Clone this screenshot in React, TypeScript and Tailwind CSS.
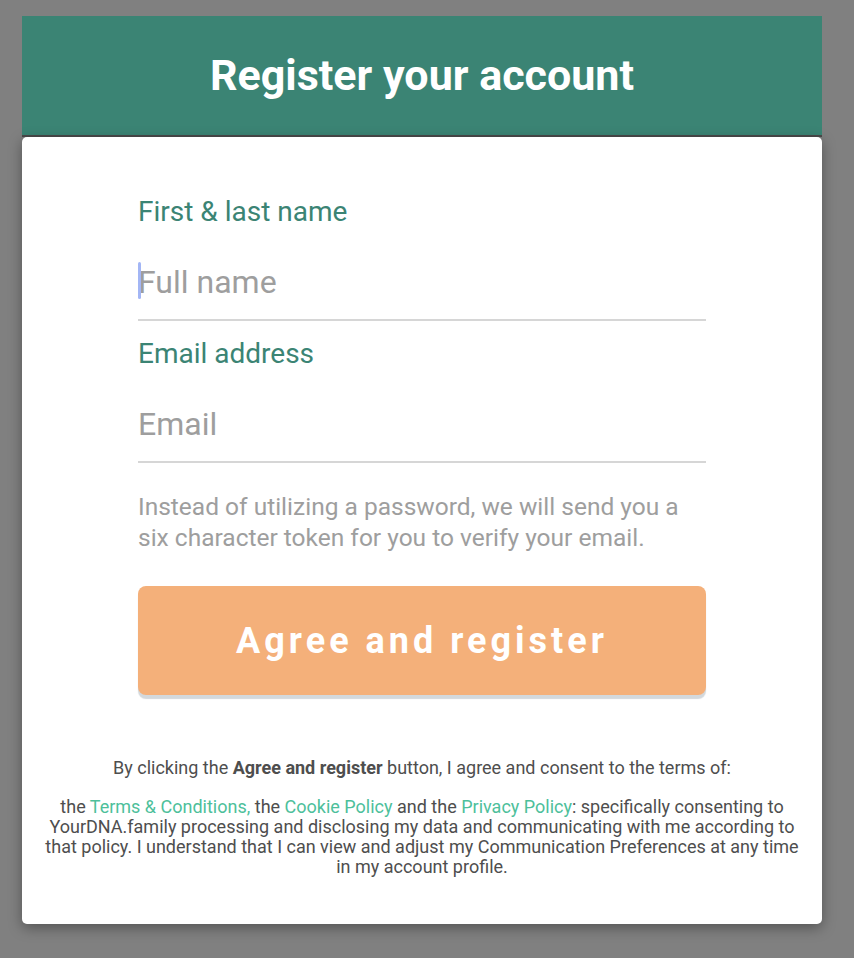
import React from "react";

const Field = ({
  label,
  placeholder,
  type,
  caret,
}: {
  label: string;
  placeholder: string;
  type: string;
  caret?: boolean;
}) => (
  <div>
    <label className="block text-[28px] leading-[36px] text-[#3b8474]">{label}</label>
    <div className="relative">
      <input
        type={type}
        placeholder={placeholder}
        className="block w-full h-[91px] pt-[14px] border-b-2 border-[#d6d6d6] bg-transparent outline-none text-[32px] text-[#333] placeholder:text-[#9e9e9e]"
      />
      {caret && (
        <span className="absolute left-0 top-[32px] w-[3px] h-[37px] rounded-sm bg-[#a3b6f5]" />
      )}
    </div>
  </div>
);

export default function App() {
  return (
    <div className="min-h-screen bg-[#808080] pt-[16px] pb-[34px] font-['Roboto',sans-serif]">
      <div className="ml-[22px] w-[800px]">
        <div className="h-[121px] bg-[#3b8474] border-b-2 border-[#4a4a4a] flex items-center justify-center">
          <h1 className="text-[43px] font-bold text-white leading-none">Register your account</h1>
        </div>
        <div className="bg-white rounded-[5px] shadow-[0_4px_14px_rgba(0,0,0,0.35)] pt-[57px] pb-[47px]">
          <div className="w-[568px] mx-auto">
            <Field label="First & last name" placeholder="Full name" type="text" caret />
            <div className="mt-[15px]">
              <Field label="Email address" placeholder="Email" type="email" />
            </div>
            <p className="mt-[28px] text-[24.5px] leading-[31px] text-[#9e9e9e]">
              Instead of utilizing a password, we will send you a six character token for you to
              verify your email.
            </p>
            <button className="mt-[33px] w-full h-[109px] rounded-[8px] bg-[#f4b07a] text-white text-[36px] font-bold tracking-[4px] shadow-[0_4px_1px_#d3d8dc]">
              Agree and register
            </button>
          </div>
          <div className="mt-[63px] px-[20px] text-center text-[18px] leading-[20px] text-[#4e4e4e]">
            <p>
              By clicking the <b>Agree and register</b> button, I agree and consent to the terms of:
            </p>
            <p className="mt-[19px]">
              the <a className="text-[#4dbf9b]">Terms &amp; Conditions,</a> the{" "}
              <a className="text-[#4dbf9b]">Cookie Policy</a> and the{" "}
              <a className="text-[#4dbf9b]">Privacy Policy</a>: specifically consenting to
              YourDNA.family processing and disclosing my data and communicating with me according
              to that policy. I understand that I can view and adjust my Communication Preferences
              at any time in my account profile.
            </p>
          </div>
        </div>
      </div>
    </div>
  );
}
